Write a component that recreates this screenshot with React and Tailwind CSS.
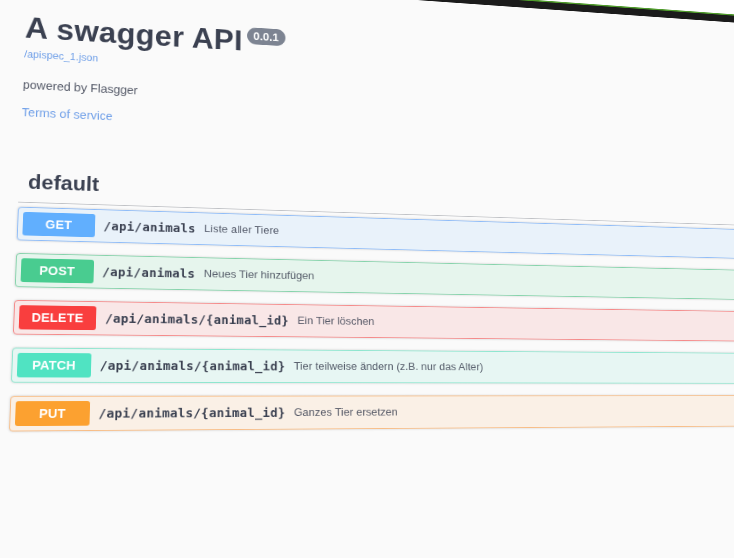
import React from "react";

const LIST_TOP = 340;
const PLANE = { width: 892, height: 260 };
const CORNERS = [
  [18, 206.7],
  [734, 229],
  [748, 426.4],
  [9, 431.5],
];

// Projective transform that carries the flat list area onto the tilted quad.
function project([[x0, y0], [x1, y1], [x2, y2], [x3, y3]], { width, height }) {
  const dx1 = x1 - x2;
  const dx2 = x3 - x2;
  const dy1 = y1 - y2;
  const dy2 = y3 - y2;
  const sx = x0 - x1 + x2 - x3;
  const sy = y0 - y1 + y2 - y3;
  const den = dx1 * dy2 - dx2 * dy1;
  const g = (sx * dy2 - dx2 * sy) / den;
  const h = (dx1 * sy - sx * dy1) / den;
  const a = (x1 - x0 + g * x1) / width;
  const b = (x3 - x0 + h * x3) / height;
  const d = (y1 - y0 + g * y1) / width;
  const e = (y3 - y0 + h * y3) / height;
  return `matrix3d(${a},${d},0,${g / width},${b},${e},0,${h / height},0,0,1,0,${x0},${y0},0,1)`;
}

const operations = [
  { method: "GET", path: "/api/animals", summary: "Liste aller Tiere", box: "border-[#8fbcf8] bg-[#e9f2fa]", badge: "bg-[#61affe]" },
  { method: "POST", path: "/api/animals", summary: "Neues Tier hinzufügen", box: "border-[#86d3ab] bg-[#e6f5ed]", badge: "bg-[#49cc90]" },
  { method: "DELETE", path: "/api/animals/{animal_id}", summary: "Ein Tier löschen", box: "border-[#f58a8a] bg-[#f9e7e7]", badge: "bg-[#f93e3e]" },
  { method: "PATCH", path: "/api/animals/{animal_id}", summary: "Tier teilweise ändern (z.B. nur das Alter)", box: "border-[#8ee6cf] bg-[#e7f6f3]", badge: "bg-[#50e3c2]" },
  { method: "PUT", path: "/api/animals/{animal_id}", summary: "Ganzes Tier ersetzen", box: "border-[#f8bd86] bg-[#faf0e6]", badge: "bg-[#fca130]" },
];

function Operation({ method, path, summary, box, badge }) {
  return (
    <div className={`flex h-10 items-center rounded border py-[5px] pl-[4.5px] shadow-[0_0_3px_rgba(0,0,0,0.19)] ${box}`}>
      <span className={`min-w-20 rounded-[3px] px-[14px] py-1.5 text-center text-[14px] leading-4 font-bold tracking-[0.2px] text-white ${badge}`}>
        {method}
      </span>
      <span className="pt-px pr-2.5 pl-2.5 font-['DejaVu_Sans_Mono','Liberation_Mono',monospace] text-[14px] font-bold tracking-[0.35px] text-[#3b4151]">
        {path}
      </span>
      <span className="text-[13px] text-[#3b4151]/85">{summary}</span>
    </div>
  );
}

export default function App() {
  return (
    <div className="h-[558px] w-[734px] overflow-hidden bg-[#fafafa] font-['Liberation_Sans',Arial,sans-serif]">
      <div
        className="flex h-[640px] w-[1200px] origin-top-left flex-col"
        style={{ transform: `${project(CORNERS, PLANE)} translateY(${-LIST_TOP}px)` }}
      >
        <div className="h-[38.5px] border-b-2 border-[#4f9a2c] bg-white" />
        <div className="h-2.5 bg-[#1b1b1b]" />
        <header className="flex h-[238px] flex-col items-start pt-[50.5px] text-[#3b4151]">
          <h1 className="flex items-start text-[36px] leading-[42px] font-bold tracking-[0.4px]">
            A swagger API
            <span className="mt-[2px] ml-[5px] rounded-full bg-[#7d8492] px-2 py-[3px] text-[14px] leading-4 tracking-normal text-white">0.0.1</span>
          </h1>
          <a className="mt-[5px] text-[12px] leading-[14px] tracking-[0.05px] text-[#6f9fe8]">/apispec_1.json</a>
          <p className="mt-[23px] text-[14px] leading-4 text-[#3b4151]/85">powered by Flasgger</p>
          <a className="mt-[17.5px] text-[14px] leading-4 tracking-[0.05px] text-[#6f9fe8]">Terms of service</a>
        </header>
        <h2 className="mb-[5px] h-[48.5px] border-b border-[#3b4151]/30 pt-[9px] pl-2.5 text-[24px] leading-7 font-bold tracking-[0.1px] text-[#3b4151]">
          default
        </h2>
        <main className="flex flex-col gap-[15px]">
          {operations.map((operation) => (
            <Operation key={operation.method} {...operation} />
          ))}
        </main>
      </div>
    </div>
  );
}
